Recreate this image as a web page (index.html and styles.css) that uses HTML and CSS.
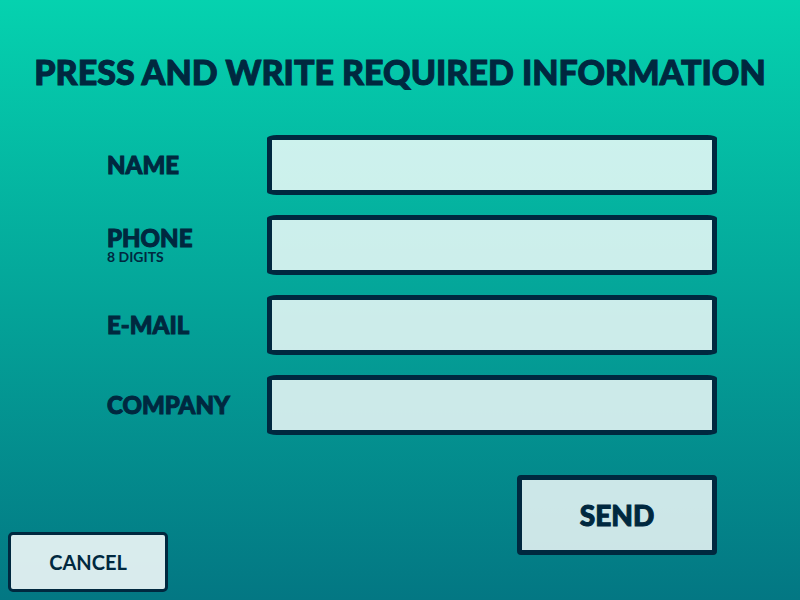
FILE: index.html
```html
<!DOCTYPE html>
<html lang="en">
<head>
  <meta charset="utf-8">
  <meta name="viewport" content="width=device-width, initial-scale=1">
  <title>Required information</title>
  <link rel="stylesheet" href="styles.css">
</head>
<body>
  <form class="page">
    <h1 class="title">PRESS AND WRITE REQUIRED INFORMATION</h1>
    <div class="fields">
      <label class="label" for="name">NAME</label>
      <input class="input" id="name" type="text">
      <label class="label" for="phone">PHONE<span class="hint">8 DIGITS</span></label>
      <input class="input" id="phone" type="tel">
      <label class="label" for="email">E-MAIL</label>
      <input class="input" id="email" type="email">
      <label class="label" for="company">COMPANY</label>
      <input class="input" id="company" type="text">
    </div>
    <div class="actions">
      <button class="button cancel" type="button">CANCEL</button>
      <button class="button send" type="submit">SEND</button>
    </div>
  </form>
</body>
</html>
```
FILE: styles.css
```css
* {
  box-sizing: border-box;
}

body {
  margin: 0;
  color: #00283f;
  font-family: Lato, "Liberation Sans", sans-serif;
}

.page {
  display: flex;
  flex-direction: column;
  min-height: 100vh;
  background: linear-gradient(#05d2af, #037783);
}

.title,
.label,
.send {
  font-family: "Lato Black", Lato, "Liberation Sans", sans-serif;
  font-weight: 900;
}

.title {
  margin: 0;
  padding: 52px 0 43px;
  font-size: 34px;
  line-height: 40px;
  text-align: center;
  -webkit-text-stroke: 1px #00283f;
}

.fields {
  display: grid;
  grid-template-columns: 160px 1fr;
  gap: 20px 0;
  align-items: center;
  padding: 0 83px 0 107px;
}

.label {
  font-size: 24px;
  line-height: 24px;
  -webkit-text-stroke: 1px #00283f;
}

.hint {
  display: block;
  font-family: Lato, "Liberation Sans", sans-serif;
  font-size: 14px;
  font-weight: 700;
  line-height: 14px;
  -webkit-text-stroke: 0;
}

.input {
  width: 100%;
  height: 60px;
  padding: 0 12px;
  border: 5px solid #00283f;
  border-radius: 10px / 3px;
  background: rgba(255, 255, 255, 0.8);
  color: inherit;
  font: 700 24px Lato, "Liberation Sans", sans-serif;
}

.actions {
  display: flex;
  flex: 1;
  justify-content: space-between;
  padding: 40px 83px 8px 8px;
}

.button {
  border: 5px solid #00283f;
  border-radius: 4px;
  color: inherit;
}

.cancel {
  align-self: flex-end;
  width: 160px;
  height: 60px;
  border-width: 3px;
  border-radius: 5px;
  background: rgba(255, 255, 255, 0.85);
  font-family: inherit;
  font-size: 20px;
  font-weight: 700;
}

.send {
  width: 200px;
  height: 80px;
  background: rgba(255, 255, 255, 0.8);
  font-size: 28px;
  -webkit-text-stroke: 1px #00283f;
}
```
